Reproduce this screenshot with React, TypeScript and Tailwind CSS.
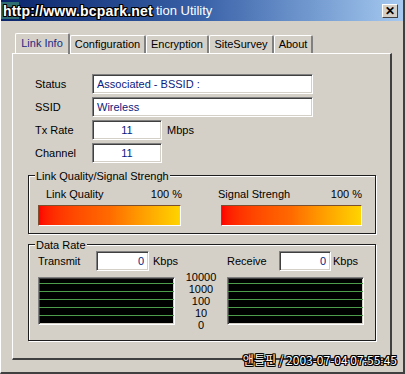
import React from "react";

const sunken =
  "border border-t-[#808080] border-l-[#808080] border-b-white border-r-white shadow-[inset_1px_1px_0_#404040,inset_-1px_-1px_0_#d4d0c8]";
const groupBox =
  "relative border border-[#1e1e1e] shadow-[1px_1px_0_#ffffff,inset_1px_1px_0_#ffffff]";
const outline =
  "[text-shadow:1px_0_0_#000,-1px_0_0_#000,0_1px_0_#000,0_-1px_0_#000,1px_1px_0_#000,-1px_-1px_0_#000,1px_-1px_0_#000,-1px_1px_0_#000]";

function Field({ label, value, wide, unit }: { label: string; value: string; wide?: boolean; unit?: string }) {
  return (
    <div className="flex h-[20px] items-center">
      <span className="w-[57px]">{label}</span>
      <div
        className={`${sunken} flex h-[20px] items-center bg-white text-[#0a1a80] ${
          wide ? "w-[221px] justify-start pl-[4px]" : "w-[70px] justify-center"
        }`}
      >
        {value}
      </div>
      {unit && <span className="ml-[5px]">{unit}</span>}
    </div>
  );
}

function Graph() {
  return (
    <div className={`${sunken} flex h-[48px] w-[137px] flex-col bg-black pt-[4px]`}>
      {[0, 1, 2, 3, 4].map((i) => (
        <div key={i} className="mt-[7px] h-px w-full bg-[#4c9c4c] first:mt-[1px]" />
      ))}
    </div>
  );
}

function Bar({ w }: { w: string }) {
  return (
    <div
      className={`${w} h-[21px] border border-t-[#7a5030] border-l-[#7a5030] border-b-white border-r-white bg-linear-to-r from-[#ff0000] via-[#ff6a00] to-[#ffd400]`}
    />
  );
}

export default function App() {
  const tabs = [
    { name: "Link Info", w: "w-[55px]" },
    { name: "Configuration", w: "w-[76px]" },
    { name: "Encryption", w: "w-[63px]" },
    { name: "SiteSurvey", w: "w-[65px]" },
    { name: "About", w: "w-[39px]" },
  ];

  return (
    <div className="relative h-[374px] w-[405px] overflow-hidden border-l border-r-2 border-b-2 border-l-white border-r-[#404040] border-b-[#404040] bg-[#d4d0c8] font-['Liberation_Sans',Arial,sans-serif] text-[11px] text-black">
      {/* Title bar */}
      <div className="relative flex h-[21px] items-center bg-linear-to-r from-[#0a246a] via-[#3a62a8] to-[#a6caf0]">
        <div className="absolute top-[2px] left-0 h-[17px] w-[18px] bg-[#2e6e72]" />
        <span
          className={`relative ml-[2px] w-[153px] text-[14px] leading-none font-bold tracking-[0.2px] text-white ${outline}`}
        >
          http://www.bcpark.net
        </span>
        <span className="text-[13px] text-white">tion Utility</span>
        <div className="ml-auto mr-[5px] flex h-[14px] w-[16px] items-center justify-center border border-t-white border-l-white border-r-[#404040] border-b-[#404040] bg-[#d4d0c8] text-[12px] leading-none font-bold">
          ✕
        </div>
      </div>

      {/* Tabs */}
      <div className="mt-[12px] flex h-[20px] items-end pl-[14px]">
        {tabs.map((t, i) => (
          <div
            key={t.name}
            className={`${t.w} flex items-center justify-center rounded-t-[2px] border-t border-l border-r-2 border-t-white border-l-white border-r-[#808080] ${
              i === 0 ? "relative z-10 -mb-px h-[21px] pb-[2px] text-[#1a2a80]" : "h-[18px]"
            }`}
          >
            {t.name}
          </div>
        ))}
      </div>

      {/* Tab panel */}
      <div className="ml-[11px] h-[307px] w-[380px] border-t border-l border-r-2 border-b-2 border-t-white border-l-white border-r-[#404040] border-b-[#404040] px-[15px] pt-[20px]">
        <div className="flex flex-col gap-[3px] pl-[7px]">
          <Field label="Status" value="Associated - BSSID :" wide />
          <Field label="SSID" value="Wireless" wide />
          <Field label="Tx Rate" value="11" unit="Mbps" />
          <Field label="Channel" value="11" />
        </div>

        {/* Link quality group */}
        <div className={`${groupBox} mt-[12px] h-[59px] w-[348px]`}>
          <span className="absolute -top-[8px] left-[6px] bg-[#d4d0c8] px-[1px]">Link Quality/Signal Strengh</span>
          <div className="flex pt-[12px] pl-[9px]">
            <div className="flex w-[144px] flex-col">
              <div className="flex h-[13px] items-center justify-between pl-[8px]">
                <span>Link Quality</span>
                <span>100 %</span>
              </div>
              <div className="mt-[4px]">
                <Bar w="w-[143px]" />
              </div>
            </div>
            <div className="ml-[39px] flex w-[141px] flex-col">
              <div className="-ml-[3px] flex h-[13px] items-center justify-between">
                <span>Signal Strengh</span>
                <span>100 %</span>
              </div>
              <div className="mt-[4px]">
                <Bar w="w-[141px]" />
              </div>
            </div>
          </div>
        </div>

        {/* Data rate group */}
        <div className={`${groupBox} mt-[10px] h-[97px] w-[348px]`}>
          <span className="absolute -top-[8px] left-[6px] bg-[#d4d0c8] px-[1px]">Data Rate</span>
          <div className="flex pt-[6px] pl-[9px]">
            <div className="flex h-[20px] w-[189px] items-center">
              <span className="w-[58px]">Transmit</span>
              <div className={`${sunken} flex h-[20px] w-[53px] items-center justify-end bg-white pr-[4px] text-[#0a1a80]`}>0</div>
              <span className="ml-[4px]">Kbps</span>
            </div>
            <div className="flex h-[20px] items-center">
              <span className="w-[52px]">Receive</span>
              <div className={`${sunken} flex h-[20px] w-[52px] items-center justify-end bg-white pr-[4px] text-[#0a1a80]`}>0</div>
              <span className="ml-[2px]">Kbps</span>
            </div>
          </div>
          <div className="mt-[6px] flex pl-[9px]">
            <Graph />
            <div className="-mt-[6px] flex w-[52px] flex-col items-center leading-[12px]">
              <span>10000</span>
              <span>1000</span>
              <span>100</span>
              <span>10</span>
              <span>0</span>
            </div>
            <Graph />
          </div>
        </div>
      </div>

      {/* watermark */}
      <span
        className={`absolute right-[6px] bottom-[6px] font-['Noto_Sans_CJK_KR','Liberation_Sans',sans-serif] text-[12px] leading-none text-white ${outline}`}
      >
        앤틀핀 / 2003-07-04 07:55:45
      </span>
    </div>
  );
}
